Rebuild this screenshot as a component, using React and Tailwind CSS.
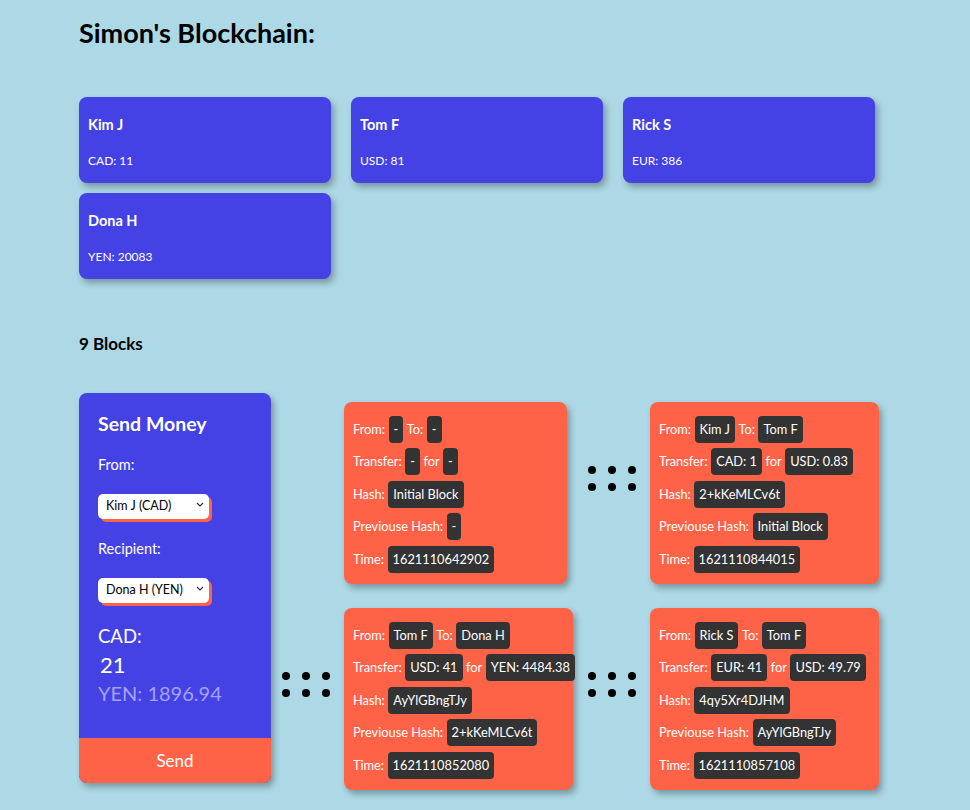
import { useState } from "react";

const accounts = [
  { name: "Kim J", currency: "CAD", amount: "11" },
  { name: "Tom F", currency: "USD", amount: "81" },
  { name: "Rick S", currency: "EUR", amount: "386" },
  { name: "Dona H", currency: "YEN", amount: "20083" },
];

const blocks = [
  { from: "-", to: "-", give: "-", get: "-", hash: "Initial Block", prev: "-", time: "1621110642902", width: "w-[223px]" },
  { from: "Kim J", to: "Tom F", give: "CAD: 1", get: "USD: 0.83", hash: "2+kKeMLCv6t", prev: "Initial Block", time: "1621110844015", width: "w-[229px]" },
  { from: "Tom F", to: "Dona H", give: "USD: 41", get: "YEN: 4484.38", hash: "AyYlGBngTJy", prev: "2+kKeMLCv6t", time: "1621110852080", width: "w-[229px]" },
  { from: "Rick S", to: "Tom F", give: "EUR: 41", get: "USD: 49.79", hash: "4qy5Xr4DJHM", prev: "AyYlGBngTJy", time: "1621110857108", width: "w-[229px]" },
];

function Chip({ children }) {
  return (
    <span className="h-[27px] px-[5px] mx-[3.5px] shrink-0 whitespace-nowrap flex items-center rounded-[4px] bg-[#333333] text-white">
      {children}
    </span>
  );
}

function Block({ block }) {
  return (
    <div className={`${block.width} mt-[9px] h-[182px] pt-[11px] pb-[9px] pl-[9px] rounded-[8px] bg-[#ff6347] text-white text-[12.8px] whitespace-nowrap shadow-[3px_4px_6px_rgba(0,0,0,0.3)]`}>
      <div className="h-[32.5px] flex items-center">
        From:<Chip>{block.from}</Chip>To:<Chip>{block.to}</Chip>
      </div>
      <div className="h-[32.5px] flex items-center">
        Transfer:<Chip>{block.give}</Chip>for<Chip>{block.get}</Chip>
      </div>
      <div className="h-[32.5px] flex items-center">
        Hash:<Chip>{block.hash}</Chip>
      </div>
      <div className="h-[32.5px] flex items-center">
        Previouse Hash:<Chip>{block.prev}</Chip>
      </div>
      <div className="h-[32.5px] flex items-center">
        Time:<Chip>{block.time}</Chip>
      </div>
    </div>
  );
}

function Dots({ className }) {
  return (
    <div className={`grid grid-cols-3 gap-x-[12px] gap-y-[9px] self-start mt-[73px] justify-self-start ${className}`}>
      {[0, 1, 2, 3, 4, 5].map((i) => (
        <span key={i} className="w-[8px] h-[8px] rounded-full bg-black" />
      ))}
    </div>
  );
}

function Select({ value, options }) {
  return (
    <div className="relative w-fit">
      <select
        defaultValue={value}
        className="appearance-none w-[111px] h-[25px] pl-[8px] rounded-[5px] bg-white text-[12.5px] text-black shadow-[3px_3px_0_#ff6347] outline-none"
      >
        {options.map((o) => (
          <option key={o}>{o}</option>
        ))}
      </select>
      <svg className="absolute right-[5px] top-[10px] pointer-events-none" width="8" height="5" viewBox="0 0 8 5">
        <path d="M1 1l3 3 3-3" fill="none" stroke="#333" strokeWidth="1.2" />
      </svg>
    </div>
  );
}

function SendMoney() {
  const options = accounts.map((a) => `${a.name} (${a.currency})`);
  return (
    <div className="row-span-2 h-[390px] flex flex-col rounded-[8px] bg-[#4441e5] text-white overflow-hidden shadow-[3px_4px_6px_rgba(0,0,0,0.3)]">
      <div className="pl-[19px] pt-[19px]">
        <h2 className="text-[19.5px] leading-[24px] font-bold">Send Money</h2>
        <p className="mt-[19px] text-[14.5px] leading-[20px]">From:</p>
        <div className="mt-[17px]">
          <Select value="Kim J (CAD)" options={options} />
        </div>
        <p className="mt-[20px] text-[14.5px] leading-[20px]">Recipient:</p>
        <div className="mt-[17px]">
          <Select value="Dona H (YEN)" options={options} />
        </div>
        <p className="mt-[21px] text-[18.5px] leading-[24px]">CAD:</p>
        <p className="mt-[3px] text-[22px] leading-[28px] pl-[2px]">21</p>
        <p className="mt-[2px] text-[20px] leading-[24px] text-[#a3a2f0]">YEN: 1896.94</p>
      </div>
      <button className="mt-auto h-[45px] bg-[#ff6347] text-white text-[17px]">Send</button>
    </div>
  );
}

export default function App() {
  const [list] = useState(blocks);

  return (
    <div className="min-h-[810px] bg-[#add8e6] font-[Lato,sans-serif] text-black">
      <div className="pl-[79px] pt-[18px] w-[880px]">
        <h1 className="text-[27px] leading-[30px] font-bold">Simon's Blockchain:</h1>

        <div className="mt-[49px] grid grid-cols-3 gap-x-[20px] gap-y-[10px] w-[796px]">
          {accounts.map((a) => (
            <div key={a.name} className="h-[86px] pl-[9px] pt-[19px] rounded-[8px] bg-[#4441e5] text-white shadow-[3px_4px_6px_rgba(0,0,0,0.3)]">
              <h3 className="text-[14.5px] leading-[18px] font-bold">{a.name}</h3>
              <p className="mt-[19px] text-[12px] leading-[16px]">
                {a.currency}: {a.amount}
              </p>
            </div>
          ))}
        </div>

        <h2 className="mt-[55px] text-[17px] leading-[20px] font-bold">{list.length * 2 + 1} Blocks</h2>

        <div className="mt-[39px] grid grid-cols-[192px_73px_244px_62px_229px] gap-y-[15px]">
          <SendMoney />
          <div />
          <Block block={list[0]} />
          <Dots />
          <Block block={list[1]} />
          <Dots className="ml-[11px]" />
          <Block block={list[2]} />
          <Dots />
          <Block block={list[3]} />
        </div>
      </div>
    </div>
  );
}
